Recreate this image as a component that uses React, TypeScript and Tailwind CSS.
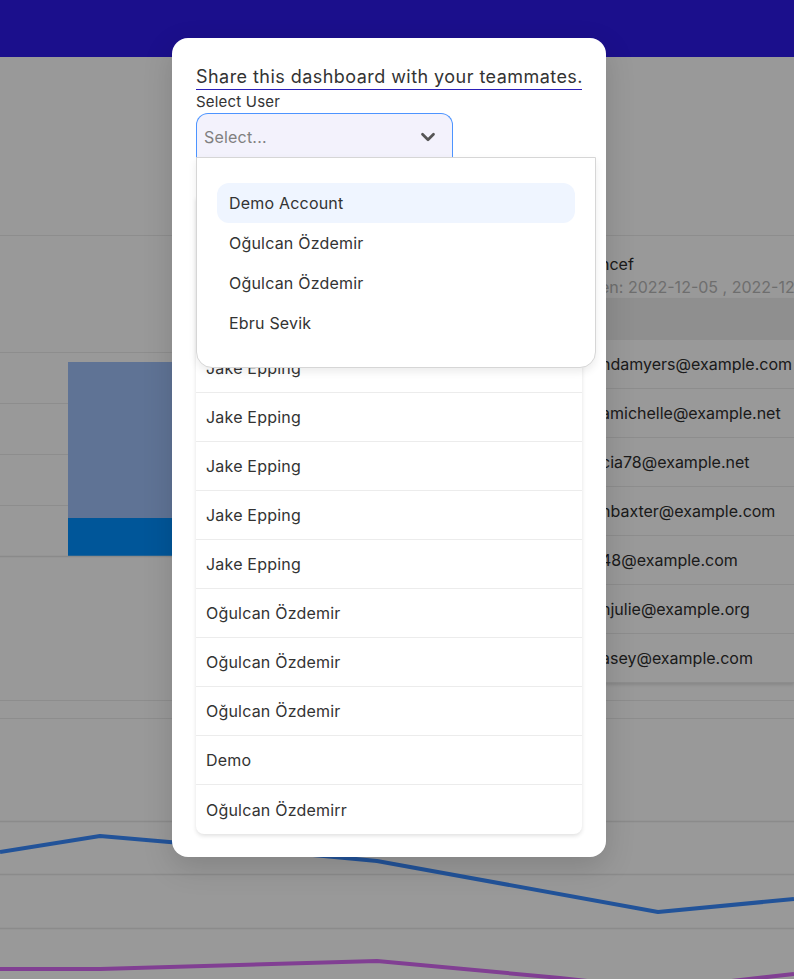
import { ChevronDown } from 'lucide-react'

const options = ['Demo Account', 'Oğulcan Özdemir', 'Oğulcan Özdemir', 'Ebru Sevik']

const members = [
  'Demo Account',
  'Oğulcan Özdemir',
  'Ebru Sevik',
  'Jake Epping',
  'Jake Epping',
  'Jake Epping',
  'Jake Epping',
  'Jake Epping',
  'Oğulcan Özdemir',
  'Oğulcan Özdemir',
  'Oğulcan Özdemir',
  'Demo',
  'Oğulcan Özdemirr',
]

const emails = [
  'ndamyers@example.com',
  'amichelle@example.net',
  'cia78@example.net',
  'nbaxter@example.com',
  '48@example.com',
  'hjulie@example.org',
  'asey@example.com',
]

function BarChart() {
  return (
    <svg width="560" height="230" viewBox="0 0 560 230" className="block">
      {[0, 51, 102, 153].map((y) => (
        <line key={y} x1="0" x2="560" y1={y + 0.5} y2={y + 0.5} stroke="#ececec" strokeWidth="1" />
      ))}
      <rect x="68" y="10" width="260" height="156" fill="#9ec0f8" />
      <rect x="68" y="166" width="260" height="38" fill="#008fff" />
      <line x1="0" x2="560" y1="204.5" y2="204.5" stroke="#e6e6e6" strokeWidth="1.5" />
    </svg>
  )
}

function LineChart() {
  return (
    <svg width="794" height="260" viewBox="0 0 794 260" className="block">
      {[102, 155, 209].map((y) => (
        <line key={y} x1="0" x2="794" y1={y + 0.5} y2={y + 0.5} stroke="#e8e8e8" strokeWidth="1.5" />
      ))}
      <polyline
        points="0,133 100,117 250,130 377,142 658,193 794,180"
        fill="none"
        stroke="#3a8bff"
        strokeWidth="4"
        strokeLinejoin="round"
      />
      <polyline
        points="0,250 100,250 377,242 560,259 660,270 794,255"
        fill="none"
        stroke="#d86af5"
        strokeWidth="4"
        strokeLinejoin="round"
      />
    </svg>
  )
}

export default function App() {
  return (
    <div className="relative h-[979px] overflow-hidden bg-white font-['Inter','Liberation_Sans',sans-serif]">
      {/* Dashboard behind the modal */}
      <header className="h-[57px] bg-[#2d19e9]" />
      <div className="h-[179px] border-b border-[#ececec]" />

      <div className="flex h-[465px] border-b border-[#ececec]">
        <div className="w-[560px] pt-[116px]">
          <BarChart />
        </div>
        <div className="flex-1 overflow-hidden">
          <div className="pl-[40px] pt-[16px] whitespace-nowrap">
            <p className="text-[16px] leading-[24px] text-[#2e2e2e]">ncef</p>
            <p className="text-[16px] leading-[22px] text-[#b8b8b8]">en: 2022-12-05 , 2022-12-11</p>
          </div>
          <div className="shadow-[0_2px_3px_rgba(0,0,0,0.12)]">
            <div className="h-[42px] bg-[#eeeeee]" />
            {emails.map((e, i) => (
              <div
                key={i}
                className="flex h-[49px] items-center whitespace-nowrap border-b border-[#ececec] pl-[41px] text-[16px] text-[#2e2e2e]"
              >
                {e}
              </div>
            ))}
          </div>
        </div>
      </div>
      <div className="h-[18px] border-b border-[#ececec]" />
      <LineChart />

      {/* Overlay */}
      <div className="absolute inset-0 bg-black/40" />

      {/* Share modal */}
      <div className="absolute left-[172px] top-[38px] flex h-[819px] w-[434px] flex-col rounded-2xl bg-white px-6 pt-[27px] shadow-[0_10px_30px_rgba(0,0,0,0.15)]">
        <h2 className="border-b border-[#2a1fb8] text-[18px] leading-[24px] tracking-[0.45px] whitespace-nowrap text-[#333]">
          Share this dashboard with your teammates.
        </h2>
        <label className="mt-[2px] text-[15px] leading-[20px] tracking-[0.2px] text-[#333]">Select User</label>

        <div className="relative mt-[1px]">
          <button className="flex h-[46px] w-[257px] items-center justify-between rounded-t-xl border border-b-0 border-[#4d94ff] bg-[#f3f2fc] pl-[7px] pr-[13px] text-[16px] tracking-[0.2px] text-[#808080]">
            <span>Select...</span>
            <ChevronDown size={22} strokeWidth={3} className="text-[#555]" />
          </button>

          <div className="absolute left-0 top-[44px] z-10 h-[211px] w-[400px] rounded-b-2xl border border-[#d6d6d6] bg-white px-5 pt-[25px] shadow-[0_4px_8px_rgba(0,0,0,0.08)]">
            {options.map((o, i) => (
              <div
                key={i}
                className={`flex h-10 items-center rounded-xl px-3 text-[16px] tracking-[0.2px] text-[#333] ${i === 0 ? 'bg-[#eff5ff]' : ''}`}
              >
                {o}
              </div>
            ))}
          </div>
        </div>

        <div className="mt-[38px] rounded-b-lg bg-white shadow-[0_2px_4px_rgba(0,0,0,0.12)]">
          {members.map((m, i) => (
            <div
              key={i}
              className={`flex h-[49px] items-center px-[10px] text-[16px] tracking-[0.2px] text-[#333] ${i < members.length - 1 ? 'border-b border-[#ececec]' : ''}`}
            >
              {m}
            </div>
          ))}
        </div>
      </div>
    </div>
  )
}
